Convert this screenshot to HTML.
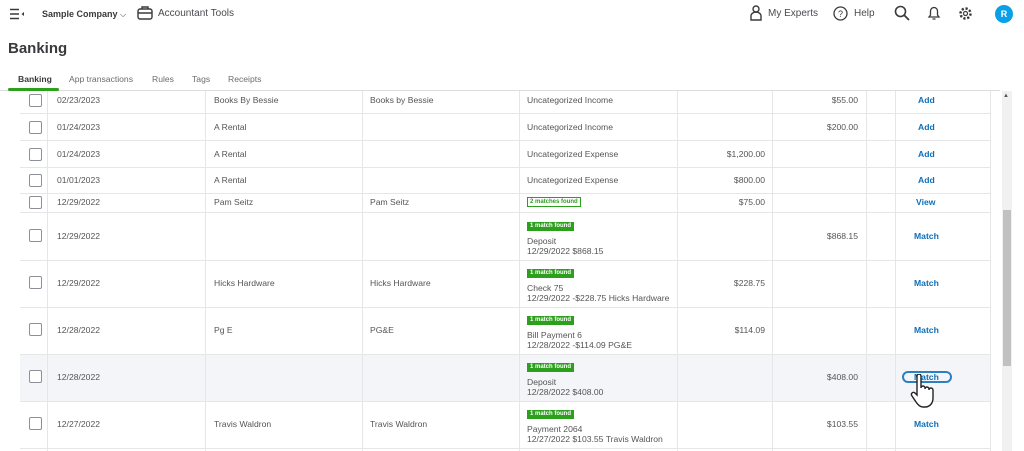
<!DOCTYPE html><html><head><style>
*{margin:0;padding:0;box-sizing:border-box}
body{width:1024px;height:451px;overflow:hidden;background:#fff;font-family:"Liberation Sans",sans-serif;color:#393a3d;position:relative}
.a{position:absolute;white-space:nowrap}
.t{font-size:8.6px;color:#555}
.hl{position:absolute;height:1px;background:#e6e6e6;left:20px;width:970px}
.vl{position:absolute;width:1px;background:#e6e6e6;top:91px;height:360px}
.cb{position:absolute;left:29px;width:13px;height:13px;border:1px solid #8d9096;border-radius:2px;background:#fff}
.lk{font-size:8.6px;font-weight:bold;color:#0d6fb8}
.bd{position:absolute;left:527px;background:#2ca01c;color:#fff;font-size:6px;padding:1px 3px;height:9px;line-height:7px;font-weight:bold}
.r{text-align:right}
.tab{position:absolute;top:74px;font-size:8.6px;color:#6b6c72}
</style></head><body>
<svg class="a" style="left:9px;top:8px" width="16" height="12"><path d="M1 1.5h9M1 6h9M1 10.5h9" stroke="#393a3d" stroke-width="1.4"/><path d="M15 4v4l-2.5-2z" fill="#393a3d"/></svg>
<div class="a" style="left:42px;top:9px;font-size:9px;font-weight:bold">Sample Company <span style="font-weight:normal;font-size:8px">⌵</span></div>
<svg class="a" style="left:137px;top:6px" width="16" height="14"><rect x="1" y="3" width="14" height="10" rx="2" fill="none" stroke="#393a3d" stroke-width="1.4"/><path d="M5 3V1h6v2M1 7h14" fill="none" stroke="#393a3d" stroke-width="1.4"/></svg>
<div class="a" style="left:158px;top:8px;font-size:10px;color:#4a4b50">Accountant Tools</div>
<svg class="a" style="left:750px;top:5px" width="12" height="16"><circle cx="6" cy="4" r="3" fill="none" stroke="#393a3d" stroke-width="1.4"/><path d="M1 15v-4a5 4 0 0 1 10 0v4z" fill="none" stroke="#393a3d" stroke-width="1.4"/></svg>
<div class="a" style="left:768px;top:8px;font-size:10px;color:#4a4b50">My Experts</div>
<svg class="a" style="left:833px;top:6px" width="15" height="15"><circle cx="7.5" cy="7.5" r="6.5" fill="none" stroke="#393a3d" stroke-width="1.3"/><text x="7.5" y="11" font-size="9" text-anchor="middle" font-family="Liberation Sans" fill="#393a3d">?</text></svg>
<div class="a" style="left:854px;top:8px;font-size:10px;color:#4a4b50">Help</div>
<svg class="a" style="left:894px;top:5px" width="16" height="16"><circle cx="6.5" cy="6.5" r="5" fill="none" stroke="#393a3d" stroke-width="1.6"/><path d="M10 10l5 5" stroke="#393a3d" stroke-width="1.8"/></svg>
<svg class="a" style="left:927px;top:5px" width="14" height="16"><path d="M2 12h10l-1.5-2V6a3.5 3.5 0 0 0-7 0v4z M5.5 14h3" fill="none" stroke="#393a3d" stroke-width="1.3"/></svg>
<svg class="a" style="left:958px;top:6px" width="15" height="15"><circle cx="7.5" cy="7.5" r="5" fill="none" stroke="#393a3d" stroke-width="2.5" stroke-dasharray="2.2 1.7"/><circle cx="7.5" cy="7.5" r="2" fill="none" stroke="#393a3d" stroke-width="1.2"/></svg>
<div class="a" style="left:995px;top:5px;width:18px;height:18px;border-radius:50%;background:#0aa0e8;color:#fff;font-size:9px;font-weight:bold;text-align:center;line-height:18px">R</div>
<div class="a" style="left:8px;top:40px;font-size:15px;font-weight:bold;color:#393a3d">Banking</div>
<div class="tab" style="left:18px;color:#393a3d;font-weight:bold">Banking</div>
<div class="tab" style="left:69px">App transactions</div>
<div class="tab" style="left:152px">Rules</div>
<div class="tab" style="left:192px">Tags</div>
<div class="tab" style="left:228px">Receipts</div>
<div class="a" style="left:0;top:90px;width:1000px;height:1px;background:#ddd"></div>
<div class="a" style="left:8px;top:88px;width:51px;height:3px;background:#2ca01c;border-radius:2px"></div>
<div class="a" style="left:20px;top:354px;width:970px;height:47px;background:#f4f5f8"></div>
<div class="vl" style="left:47px"></div><div class="vl" style="left:205px"></div><div class="vl" style="left:362px"></div><div class="vl" style="left:519px"></div><div class="vl" style="left:677px"></div><div class="vl" style="left:772px"></div><div class="vl" style="left:866px"></div><div class="vl" style="left:895px"></div><div class="vl" style="left:990px"></div>
<div class="hl" style="top:113px"></div><div class="hl" style="top:140px"></div><div class="hl" style="top:167px"></div><div class="hl" style="top:193px"></div><div class="hl" style="top:212px"></div><div class="hl" style="top:260px"></div><div class="hl" style="top:307px"></div><div class="hl" style="top:354px"></div><div class="hl" style="top:401px"></div><div class="hl" style="top:448px"></div>
<div class="a" style="left:1002px;top:91px;width:10px;height:360px;background:#f1f1f1"></div>
<div class="a" style="left:1003px;top:210px;width:8px;height:156px;background:#c1c1c1"></div>
<div class="a" style="left:1003px;top:93px;font-size:6px;color:#555">▲</div>

<div class="cb" style="top:94px"></div><div class="a t" style="left:57px;top:95px">02/23/2023</div><div class="a t" style="left:214px;top:95px">Books By Bessie</div><div class="a t" style="left:370px;top:95px">Books by Bessie</div><div class="a t" style="left:527px;top:95px">Uncategorized Income</div><div class="a t r" style="left:772px;width:86px;top:95px">$55.00</div><div class="a lk" style="left:918px;top:95px">Add</div>
<div class="cb" style="top:121px"></div><div class="a t" style="left:57px;top:122px">01/24/2023</div><div class="a t" style="left:214px;top:122px">A Rental</div><div class="a t" style="left:527px;top:122px">Uncategorized Income</div><div class="a t r" style="left:772px;width:86px;top:122px">$200.00</div><div class="a lk" style="left:918px;top:122px">Add</div>
<div class="cb" style="top:148px"></div><div class="a t" style="left:57px;top:149px">01/24/2023</div><div class="a t" style="left:214px;top:149px">A Rental</div><div class="a t" style="left:527px;top:149px">Uncategorized Expense</div><div class="a t r" style="left:677px;width:88px;top:149px">$1,200.00</div><div class="a lk" style="left:918px;top:149px">Add</div>
<div class="cb" style="top:174px"></div><div class="a t" style="left:57px;top:175px">01/01/2023</div><div class="a t" style="left:214px;top:175px">A Rental</div><div class="a t" style="left:527px;top:175px">Uncategorized Expense</div><div class="a t r" style="left:677px;width:88px;top:175px">$800.00</div><div class="a lk" style="left:918px;top:175px">Add</div>
<div class="cb" style="top:196px"></div><div class="a t" style="left:57px;top:197px">12/29/2022</div><div class="a t" style="left:214px;top:197px">Pam Seitz</div><div class="a t" style="left:370px;top:197px">Pam Seitz</div><div class="a" style="left:527px;top:197px;font-size:6px;font-weight:bold;color:#2ca01c;border:1px solid #2ca01c;padding:0 2px;height:10px;line-height:8px">2 matches found</div><div class="a t r" style="left:677px;width:88px;top:197px">$75.00</div><div class="a lk" style="left:916px;top:197px">View</div>

<div class="cb" style="top:229px"></div><div class="a t" style="left:57px;top:231px">12/29/2022</div><div class="bd" style="top:222px">1 match found</div><div class="a t" style="left:527px;top:236px">Deposit</div><div class="a t" style="left:527px;top:246px">12/29/2022 $868.15</div><div class="a t r" style="left:772px;width:86px;top:231px">$868.15</div><div class="a lk" style="left:914px;top:231px">Match</div>
<div class="cb" style="top:276px"></div><div class="a t" style="left:57px;top:278px">12/29/2022</div><div class="a t" style="left:214px;top:278px">Hicks Hardware</div><div class="a t" style="left:370px;top:278px">Hicks Hardware</div><div class="bd" style="top:269px">1 match found</div><div class="a t" style="left:527px;top:283px">Check 75</div><div class="a t" style="left:527px;top:293px">12/29/2022 -$228.75 Hicks Hardware</div><div class="a t r" style="left:677px;width:88px;top:278px">$228.75</div><div class="a lk" style="left:914px;top:278px">Match</div>
<div class="cb" style="top:323px"></div><div class="a t" style="left:57px;top:325px">12/28/2022</div><div class="a t" style="left:214px;top:325px">Pg E</div><div class="a t" style="left:370px;top:325px">PG&amp;E</div><div class="bd" style="top:316px">1 match found</div><div class="a t" style="left:527px;top:330px">Bill Payment 6</div><div class="a t" style="left:527px;top:340px">12/28/2022 -$114.09 PG&amp;E</div><div class="a t r" style="left:677px;width:88px;top:325px">$114.09</div><div class="a lk" style="left:914px;top:325px">Match</div>
<div class="cb" style="top:370px"></div><div class="a t" style="left:57px;top:372px">12/28/2022</div><div class="bd" style="top:363px">1 match found</div><div class="a t" style="left:527px;top:377px">Deposit</div><div class="a t" style="left:527px;top:387px">12/28/2022 $408.00</div><div class="a t r" style="left:772px;width:86px;top:372px">$408.00</div><div class="a" style="left:902px;top:371px;width:50px;height:12px;border:2px solid #2d7fc1;border-radius:7px"></div><div class="a lk" style="left:914px;top:372px">Match</div>
<svg class="a" style="left:910px;top:374px" width="28" height="36"><path d="M7 2a2 2 0 0 1 4 0v12a2 2 0 0 1 4 0v1a2 2 0 0 1 4 0v1a2 2 0 0 1 4 0v8c0 5-3 9-8 9h-2c-3 0-5-2-7-5l-4-6a2 2 0 0 1 3-3l2 2z" fill="#fff" stroke="#222" stroke-width="1.4"/></svg>
<div class="cb" style="top:417px"></div><div class="a t" style="left:57px;top:419px">12/27/2022</div><div class="a t" style="left:214px;top:419px">Travis Waldron</div><div class="a t" style="left:370px;top:419px">Travis Waldron</div><div class="bd" style="top:410px">1 match found</div><div class="a t" style="left:527px;top:424px">Payment 2064</div><div class="a t" style="left:527px;top:434px">12/27/2022 $103.55 Travis Waldron</div><div class="a t r" style="left:772px;width:86px;top:419px">$103.55</div><div class="a lk" style="left:914px;top:419px">Match</div>
</body></html>
